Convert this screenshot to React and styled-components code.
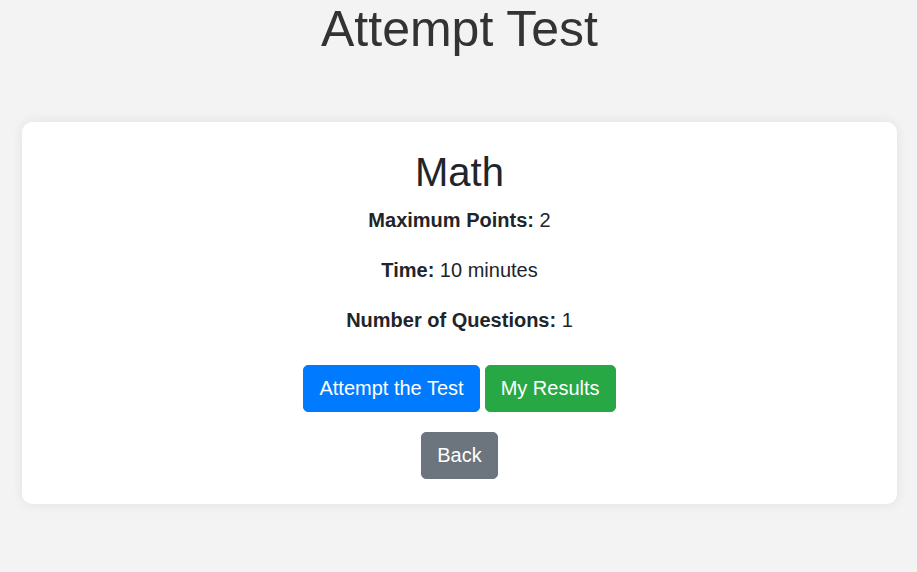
import React from 'react';
import styled, { createGlobalStyle } from 'styled-components';

const GlobalStyle = createGlobalStyle`
  html, body {
    margin: 0;
    padding: 0;
    background: #f3f3f3;
    font-family: "Liberation Sans", Arial, sans-serif;
  }
`;

const Page = styled.div`
  display: flex;
  flex-direction: column;
  align-items: stretch;
  padding: 1px 20px 40px 22px;
`;

const PageTitle = styled.h1`
  margin: 0 0 65px;
  text-align: center;
  font-size: 50px;
  font-weight: 400;
  line-height: 56px;
  color: #333;
`;

const Card = styled.div`
  background: #fff;
  border-radius: 10px;
  box-shadow: 0 0 12px rgba(0, 0, 0, 0.08);
  padding: 26px 20px 25px;
  display: flex;
  flex-direction: column;
  align-items: center;
  color: #212529;
`;

const TestName = styled.h2`
  margin: 0 0 9px;
  font-size: 40px;
  font-weight: 400;
  line-height: 48px;
`;

const Info = styled.p`
  margin: 0 0 20px;
  font-size: 20px;
  line-height: 30px;

  b {
    font-weight: 700;
  }
`;

const ButtonRow = styled.div`
  display: flex;
  justify-content: center;
  gap: 5px;
  margin-top: 10px;
  & + & {
    margin-top: 20px;
  }
`;

const colors = {
  primary: '#007bff',
  success: '#28a745',
  secondary: '#6c757d',
};

const Button = styled.button`
  font-family: inherit;
  font-size: 20px;
  line-height: 29px;
  padding: 8px 15px;
  border: 1px solid ${({ variant }) => colors[variant]};
  background: ${({ variant }) => colors[variant]};
  color: #fff;
  border-radius: 5px;
  cursor: pointer;
`;

export default function App() {
  return (
    <>
      <GlobalStyle />
      <Page>
        <PageTitle>Attempt Test</PageTitle>
        <Card>
          <TestName>Math</TestName>
          <Info><b>Maximum Points:</b> 2</Info>
          <Info><b>Time:</b> 10 minutes</Info>
          <Info><b>Number of Questions:</b> 1</Info>
          <ButtonRow>
            <Button variant="primary">Attempt the Test</Button>
            <Button variant="success">My Results</Button>
          </ButtonRow>
          <ButtonRow>
            <Button variant="secondary">Back</Button>
          </ButtonRow>
        </Card>
      </Page>
    </>
  );
}
